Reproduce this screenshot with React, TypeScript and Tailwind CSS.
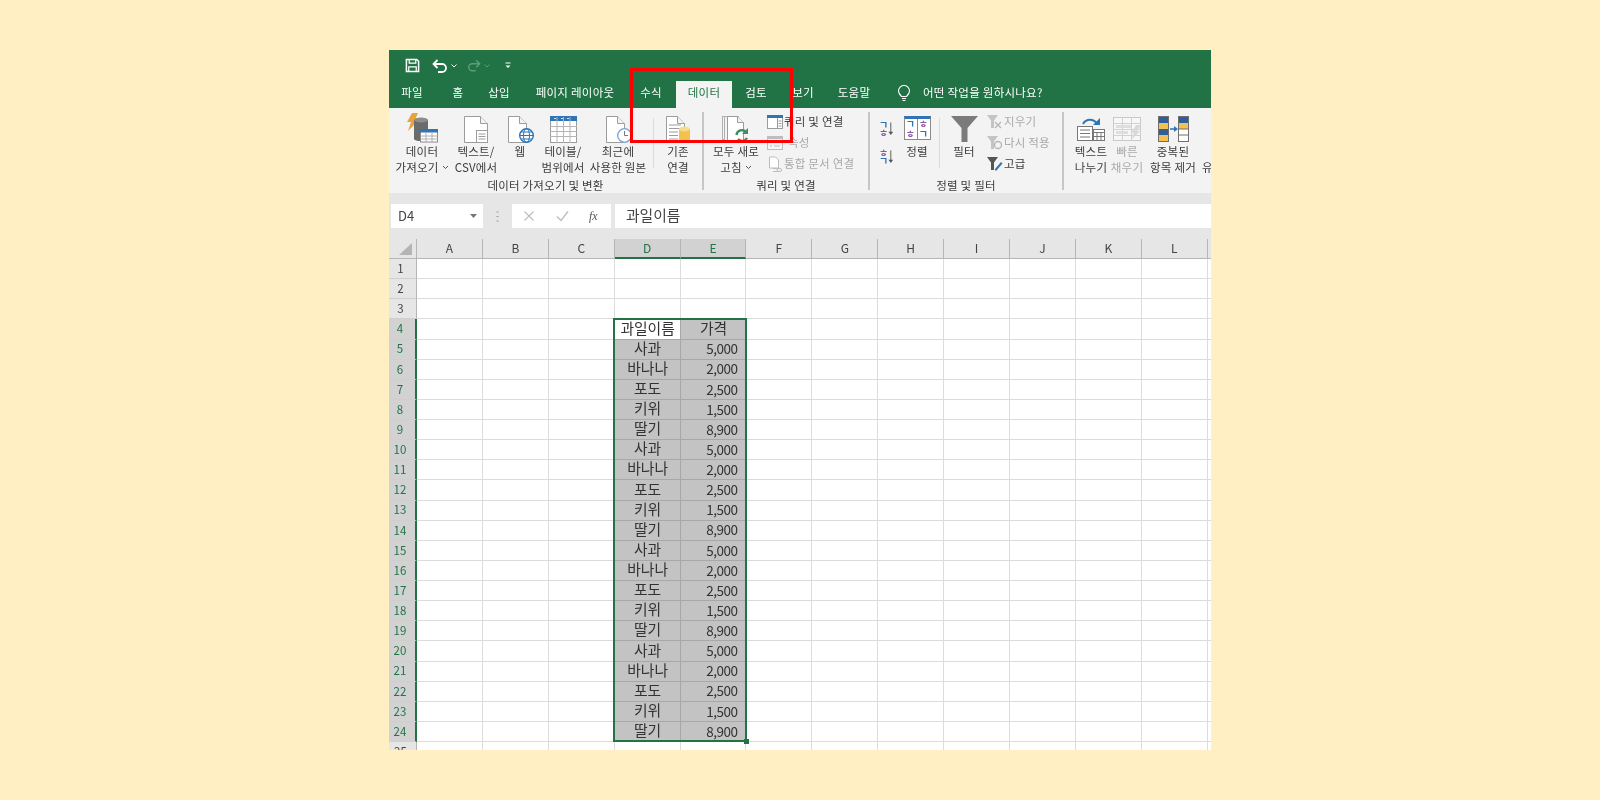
import React from "react";

const F = "font-['Noto_Sans_CJK_KR','Noto_Sans',sans-serif]";
const ST = "#9c9c9c";

const DocShape = ({ w = 18 }: { w?: number }) => (
  <g>
    <path d={`M1.500 0.500h${w - 7}l7 7v19h-${w}z`} fill="#fff" stroke={ST} />
    <path d={`M${w - 5.5} 0.500v7h7`} fill="#f3f3f3" stroke={ST} />
  </g>
);

const Cyl = ({ x, y, w, h, c, top }: { x: number; y: number; w: number; h: number; c: string; top: string }) => (
  <g>
    <rect x={x} y={y + 2} width={w} height={h - 2} fill={c} />
    <ellipse cx={x + w / 2} cy={y + 2} rx={w / 2} ry={2.5} fill={top} />
    <ellipse cx={x + w / 2} cy={y + h} rx={w / 2} ry={2} fill={c} />
  </g>
);

const IconData = () => (
  <svg width="31" height="30" viewBox="0 0 31 30">
    <path d="M5 0h6L8 7h4L1 18l3-9H0z" fill="#e8a33d" />
    <Cyl x={7} y={5} w={14} h={21} c="#6b6b6b" top="#8d8d8d" />
    <rect x="13.500" y="16.500" width="17" height="12.500" fill="#fff" stroke="#8a8a8a" />
    <rect x="13" y="16" width="18" height="3.500" fill="#2f75b5" />
    <path d="M19 19v10M25 19v10M13.500 23h17M13.500 26h17" stroke="#b0b0b0" />
  </svg>
);

const IconCsv = () => (
  <svg width="26" height="27" viewBox="0 0 26 27">
    <DocShape w={23} />
    <rect x="13.500" y="14.500" width="11" height="12" fill="#fff" stroke={ST} />
    <path d="M15.500 18h7M15.500 20.500h7M15.500 23h7" stroke={ST} />
  </svg>
);

const IconWeb = () => (
  <svg width="27" height="27" viewBox="0 0 27 27">
    <DocShape w={18} />
    <circle cx="19.500" cy="19.500" r="6.800" fill="#fff" stroke="#2f75b5" strokeWidth="1.400" />
    <ellipse cx="19.500" cy="19.500" rx="3" ry="6.800" fill="none" stroke="#2f75b5" />
    <path d="M12.500 19.500h14M14 16h11M14 23h11" stroke="#2f75b5" />
  </svg>
);

const IconTable = () => (
  <svg width="27" height="27" viewBox="0 0 27 27">
    <rect x="0.500" y="0.500" width="26" height="26" fill="#fff" stroke={ST} />
    <rect x="0" y="0" width="27" height="5" fill="#2f75b5" />
    <path d="M7 1v26M13.500 1v26M20 1v26M0 10.500h27M0 15.500h27M0 20.500h27" stroke="#b5b5b5" />
    <path d="M4 2.500h2M11 2.500h2M17 2.500h2" stroke="#cfe2f3" />
  </svg>
);

const IconRecent = () => (
  <svg width="27" height="27" viewBox="0 0 27 27">
    <DocShape w={18} />
    <circle cx="19.500" cy="19.500" r="6.800" fill="#fff" stroke="#7aa3cc" strokeWidth="1.300" />
    <path d="M19.500 15v4.500h3.500" fill="none" stroke="#777" />
  </svg>
);

const IconExisting = () => (
  <svg width="27" height="27" viewBox="0 0 27 27">
    <DocShape w={18} />
    <path d="M4 9h12M4 12.500h12M4 16h9M4 19.500h9M4 23h9" stroke={ST} />
    <Cyl x={14} y={11} w={11} h={14} c="#f2c14e" top="#f8dc8e" />
  </svg>
);

const IconRefresh = () => (
  <svg width="29" height="27" viewBox="0 0 29 27">
    <rect x="0.500" y="0.500" width="14" height="23" fill="#f3f3f3" stroke="#b0b0b0" />
    <rect x="2.500" y="0.500" width="14" height="24" fill="#f3f3f3" stroke="#b0b0b0" />
    <path d="M5.500 0.500h10l6 6v19h-16z" fill="#fff" stroke={ST} />
    <path d="M15.500 0.500v6h6" fill="#f3f3f3" stroke={ST} />
    <path d="M14.500 19a5.500 5.500 0 0 1 9.500-3" fill="none" stroke="#3d8f5f" strokeWidth="2.400" />
    <path d="M26 12v6h-6z" fill="#3d8f5f" />
    <path d="M25 22a5.500 5.500 0 0 1-9 1" fill="none" stroke="#3d8f5f" strokeWidth="2.400" />
  </svg>
);

const IconQuery = () => (
  <svg width="16" height="14" viewBox="0 0 16 14">
    <rect x="0.500" y="0.500" width="15" height="13" fill="#fff" stroke={ST} />
    <rect x="0" y="0" width="16" height="3" fill="#2f75b5" />
    <path d="M10.500 3v10M11.500 6h3M11.500 8.500h3M11.500 11h3" stroke={ST} />
  </svg>
);

const IconProps = () => (
  <svg width="16" height="14" viewBox="0 0 16 14">
    <rect x="0.500" y="0.500" width="15" height="13" fill="#f7f7f7" stroke="#bdbdbd" />
    <rect x="0" y="0" width="16" height="3" fill="#bdbdbd" />
    <path d="M3 6.500h2M7 6.500h6M3 10h2M7 10h6" stroke="#bdbdbd" />
  </svg>
);

const IconLinkDoc = () => (
  <svg width="16" height="16" viewBox="0 0 16 16">
    <path d="M2.500 1h6l3 3v8h-9z" fill="#fff" stroke="#bdbdbd" />
    <path d="M6 12.500h3a1.500 1.500 0 0 1 0 3H6M10 12.500h3a1.500 1.500 0 0 1 0 3h-3" fill="none" stroke="#bdbdbd" />
  </svg>
);

const SortSmall = ({ top, bottom, hTop = false }: { top: string; bottom: string; hTop?: boolean }) => (
  <div className="flex items-center h-[16px] w-[15px]">
    <div className="flex flex-col items-center leading-[8px] text-[10px] font-bold">
      <span className={hTop ? "text-[#8e5aa8]" : "text-[#2f75b5]"}>{top}</span>
      <span className={hTop ? "text-[#2f75b5]" : "text-[#8e5aa8]"}>{bottom}</span>
    </div>
    <svg width="6" height="14" viewBox="0 0 6 14">
      <path d="M3 0v11" stroke="#555" />
      <path d="M0.500 10h5L3 13.500z" fill="#555" />
    </svg>
  </div>
);

const BigSort = () => (
  <div className="w-[27px] h-[24px] border border-[#8a8a8a] bg-white border-t-[3px] border-t-[#2f75b5] flex text-[10px] leading-[10px] font-bold">
    <div className="flex-1 flex flex-col items-center justify-center border-r border-[#8a8a8a]">
      <span className="text-[#2f75b5]">ㄱ</span>
      <span className="text-[#8e5aa8]">ㅎ</span>
    </div>
    <div className="flex-1 flex flex-col items-center justify-center">
      <span className="text-[#8e5aa8]">ㅎ</span>
      <span className="text-[#2f75b5]">ㄱ</span>
    </div>
  </div>
);

const Funnel = () => (
  <svg width="27" height="26" viewBox="0 0 27 26">
    <path d="M0 0h27L16.500 12v14h-6V12z" fill="#7b7b7b" />
  </svg>
);

const SmallFunnel = ({ c, mark }: { c: string; mark: "x" | "r" | "p" }) => (
  <svg width="16" height="15" viewBox="0 0 16 15">
    <path d="M0 1h11L7 6.500V14H4V6.500z" fill={c} />
    {mark === "x" && <path d="M8 8l6 6M14 8l-6 6" stroke="#b5b5b5" strokeWidth="1.300" />}
    {mark === "r" && <circle cx="11" cy="10" r="3.500" fill="none" stroke="#b5b5b5" strokeWidth="1.300" />}
    {mark === "p" && <path d="M8 13l6-7 1.500 1.500-6 7H8z" fill="#2f75b5" />}
  </svg>
);

const IconSplit = () => (
  <svg width="30" height="26" viewBox="0 0 30 26">
    <path d="M7 8a8 8 0 0 1 14 0" fill="none" stroke="#2f75b5" strokeWidth="2" />
    <path d="M17 9h7V2z" fill="#2f75b5" />
    <rect x="1.500" y="10.500" width="15" height="14" fill="#fff" stroke="#777" />
    <path d="M4 14h10M4 17.500h10M4 21h10" stroke="#777" />
    <rect x="17.500" y="13.500" width="11" height="11" fill="#fff" stroke="#777" />
    <path d="M17.500 16.500h11M21 17v7M25 17v7M17.500 20.500h11" stroke="#777" />
  </svg>
);

const IconFlash = () => (
  <svg width="29" height="26" viewBox="0 0 29 26">
    <rect x="0.500" y="1.500" width="27" height="23" fill="#f7f7f7" stroke="#c9c9c9" />
    <path d="M0 7.500h28M0 13.500h28M0 19.500h28M9.500 1v24M18.500 1v24" stroke="#d2d2d2" />
    <path d="M3 9h15v3H3zM3 15h12v3H3z" fill="#dedede" />
    <path d="M23 9h5l-4 6h3l-9 9 3-7h-3z" fill="#d9d9d9" />
  </svg>
);

const IconDup = () => (
  <svg width="31" height="26" viewBox="0 0 31 26">
    <rect x="0.500" y="0.500" width="10" height="25" fill="#fff" stroke="#6f6f6f" />
    <rect x="1" y="1" width="9" height="6" fill="#2f5d9e" />
    <rect x="1" y="7" width="9" height="6" fill="#f2c14e" />
    <rect x="1" y="13" width="9" height="6" fill="#2f5d9e" />
    <rect x="1" y="19" width="9" height="6" fill="#f2c14e" />
    <path d="M12 13h5" stroke="#2f75b5" strokeWidth="1.500" />
    <path d="M16 10l4 3-4 3z" fill="#2f75b5" />
    <rect x="20.500" y="0.500" width="10" height="25" fill="#fff" stroke="#6f6f6f" />
    <rect x="21" y="1" width="9" height="6" fill="#2f5d9e" />
    <rect x="21" y="7" width="9" height="6" fill="#f2c14e" />
    <path d="M21 19h9M21 13h9" stroke="#6f6f6f" />
  </svg>
);

const Big = ({ w, icon, lines, dim, caret, pt = 8 }: { w: number; icon: React.ReactNode; lines: string[]; dim?: boolean; caret?: number; pt?: number }) => (
  <div className="flex flex-col items-center shrink-0" style={{ width: w }}>
    <div className="h-[36px] flex items-start justify-center" style={{ paddingTop: pt }}>
      {icon}
    </div>
    {lines.map((l, i) => (
      <div key={i} className={`leading-[15px] whitespace-nowrap flex items-center justify-center h-[15.500px] ${dim ? "text-[#a9a9a9]" : "text-[#3c3c3c]"}`}>
        {l}
        {caret === i && (
          <svg width="7" height="5" viewBox="0 0 7 5" className="ml-[3px]">
            <path d="M1 1l2.500 2.500L6 1" fill="none" stroke="#555" />
          </svg>
        )}
      </div>
    ))}
  </div>
);

const Small = ({ icon, text, dim, gap = 1 }: { icon: React.ReactNode; text: string; dim?: boolean; gap?: number }) => (
  <div className={`h-[21px] flex items-center whitespace-nowrap ${dim ? "text-[#a9a9a9]" : "text-[#3c3c3c]"}`} style={{ gap }}>
    <div className="w-[16px] flex justify-center">{icon}</div>
    {text}
  </div>
);

const Group = ({ w, label, children }: { w: number; label: string; children: React.ReactNode }) => (
  <div className="flex shrink-0 h-full" style={{ width: w }}>
    <div className="flex-1 flex flex-col min-w-0">
      <div className="flex h-[69px]">{children}</div>
      <div className="h-[16px] leading-[17px] text-center text-[#3c3c3c] whitespace-nowrap">{label}</div>
    </div>
    <div className="w-[2px] bg-[#c6c6c6] mt-[4px] mb-[3px] shrink-0" />
  </div>
);

const VLine = ({ ml, mr }: { ml: number; mr: number }) => (
  <div className="w-px bg-[#dcdcdc] mt-[10px] h-[50px] shrink-0" style={{ marginLeft: ml, marginRight: mr }} />
);

const Tab = ({ w, t, active, mr = 0 }: { w: number; t: string; active?: boolean; mr?: number }) => (
  <div
    className={`h-[27px] flex items-center justify-center pb-[3px] shrink-0 whitespace-nowrap ${active ? "bg-[#f3f3f3] text-[#217346]" : "text-white"}`}
    style={{ width: w, marginRight: mr }}
  >
    {t}
  </div>
);

const cols = ["A", "B", "C", "D", "E", "F", "G", "H", "I", "J", "K", "L", "M"];
const fruits = ["사과", "바나나", "포도", "키위", "딸기"];
const prices = ["5,000", "2,000", "2,500", "1,500", "8,900"];
const rows = Array.from({ length: 25 }, (_, i) => i + 1);

const Row = ({ n }: { n: number }) => {
  const sel = n >= 4 && n <= 24;
  const idx = (n - 5) % 5;
  return (
    <div className="grid grid-cols-[28px_repeat(13,65.900px)] h-[20.125px]">
      <div
        className={`flex items-center justify-center pr-1 text-[11.500px] border-b border-[#cfcfcf] ${
          sel ? "bg-[#d2d2d2] text-[#217346] border-r-2 border-r-[#217346]" : "bg-[#e6e6e6] text-[#444444] border-r border-r-[#b5b5b5]"
        }`}
      >
        {n}
      </div>
      {cols.map((c) => {
        const inSel = sel && (c === "D" || c === "E");
        let text = "";
        let right = false;
        if (inSel) {
          if (n === 4) text = c === "D" ? "과일이름" : "가격";
          else if (c === "D") text = fruits[idx];
          else {
            text = prices[idx];
            right = true;
          }
        }
        const white = n === 4 && c === "D";
        return (
          <div
            key={c}
            className={`flex items-center leading-none text-[#333333] border-r border-b ${
              inSel ? (white ? "bg-white border-[#a8a8a8]" : "bg-[#c3c3c3] border-[#a8a8a8]") : "bg-white border-[#dcdcdc]"
            } ${right ? "justify-end pr-[8px] text-[13.500px] tracking-[-0.5px]" : "justify-center pb-[2px] pl-[1px] text-[14.800px]"}`}
          >
            {text}
          </div>
        );
      })}
    </div>
  );
};

export default function App() {
  return (
    <div className={`w-[1600px] h-[800px] bg-[#ffefc3] pt-[50px] overflow-hidden ${F}`}>
      <div className="relative w-[822px] h-[700px] mx-auto">
        <div className="w-full h-full overflow-hidden bg-white flex flex-col blur-[0.4px]">
          {/* title bar */}
          <div className="bg-[#217346] h-[58px] shrink-0 flex flex-col">
            <div className="h-[31px] flex items-center text-white">
              <svg width="15" height="15" viewBox="0 0 16 16" className="ml-[16px]">
                <path d="M1.500 1.500h11l2 2v11h-13z" fill="none" stroke="#fff" strokeWidth="1.600" />
                <path d="M4.500 1.500v4h7v-4M4 14.500v-5h8v5" fill="none" stroke="#fff" strokeWidth="1.300" />
              </svg>
              <svg width="16" height="14" viewBox="0 0 16 14" className="ml-[12px]">
                <path d="M2 5h8a4 4 0 0 1 0 8H6" fill="none" stroke="#fff" strokeWidth="1.800" />
                <path d="M5.500 1L1.500 5l4 4" fill="none" stroke="#fff" strokeWidth="1.800" />
              </svg>
              <svg width="6" height="4" viewBox="0 0 6 4" className="ml-[3px]">
                <path d="M0.500 0.500L3 3l2.500-2.500" fill="none" stroke="#fff" />
              </svg>
              <svg width="14" height="13" viewBox="0 0 16 14" className="ml-[10px]">
                <path d="M14 5H6a4 4 0 0 0 0 8h4" fill="none" stroke="#5f9c7c" strokeWidth="1.600" />
                <path d="M10.500 1l4 4-4 4" fill="none" stroke="#5f9c7c" strokeWidth="1.600" />
              </svg>
              <svg width="6" height="4" viewBox="0 0 6 4" className="ml-[3px]">
                <path d="M0.500 0.500L3 3l2.500-2.500" fill="none" stroke="#5f9c7c" />
              </svg>
              <svg width="6" height="7" viewBox="0 0 6 7" className="ml-[15px]">
                <path d="M0.500 1h5" stroke="#fff" />
                <path d="M0.500 3.500h5L3 6z" fill="#fff" />
              </svg>
            </div>
            <div className="h-[27px] flex items-center text-[11.500px] tracking-[0.25px]">
              <Tab w={46} t="파일" />
              <Tab w={46} t="홈" />
              <Tab w={36} t="삽입" />
              <Tab w={116} t="페이지 레이아웃" />
              <Tab w={36} t="수식" mr={7} />
              <Tab w={56} t="데이터" active />
              <Tab w={48} t="검토" />
              <Tab w={46} t="보기" />
              <Tab w={56} t="도움말" />
              <svg width="14" height="17" viewBox="0 0 14 17" className="ml-[15px] mb-[3px]">
                <path d="M4.500 11.500C3 10 1.500 8.500 1.500 6a5.500 5.500 0 0 1 11 0c0 2.500-1.500 4-3 5.500z" fill="none" stroke="#fff" strokeWidth="1.100" />
                <path d="M5 13.500h4M5.500 15.500h3" stroke="#fff" />
              </svg>
              <div className="ml-[12px] pb-[3px] text-white whitespace-nowrap">어떤 작업을 원하시나요?</div>
            </div>
          </div>

          {/* ribbon */}
          <div className="bg-[#f3f3f3] h-[85px] shrink-0 flex text-[11.500px] tracking-[0.2px]">
            <Group w={315} label="데이터 가져오기 및 변환">
              <Big w={66} pt={5} icon={<IconData />} lines={["데이터", "가져오기"]} caret={1} />
              <Big w={42} icon={<IconCsv />} lines={["텍스트/", "CSV에서"]} />
              <Big w={46} icon={<IconWeb />} lines={["웹"]} />
              <Big w={40} icon={<IconTable />} lines={["테이블/", "범위에서"]} />
              <Big w={70} icon={<IconRecent />} lines={["최근에", "사용한 원본"]} />
              <VLine ml={0} mr={0} />
              <Big w={48} icon={<IconExisting />} lines={["기존", "연결"]} />
            </Group>
            <Group w={166} label="쿼리 및 연결">
              <Big w={64} icon={<IconRefresh />} lines={["모두 새로", "고침"]} caret={1} />
              <div className="pt-[3px] -ml-[1px]">
                <Small icon={<IconQuery />} text="쿼리 및 연결" />
                <Small icon={<IconProps />} text="속성" dim gap={5} />
                <Small icon={<IconLinkDoc />} text="통합 문서 연결" dim />
              </div>
            </Group>
            <Group w={194} label="정렬 및 필터">
              <div className="w-[33px] flex flex-col items-center pt-[13px] gap-[12px] shrink-0">
                <SortSmall top="ㄱ" bottom="ㅎ" />
                <SortSmall top="ㅎ" bottom="ㄱ" hTop />
              </div>
              <Big w={28} icon={<BigSort />} lines={["정렬"]} />
              <VLine ml={8} mr={6} />
              <Big w={36} icon={<Funnel />} lines={["필터"]} />
              <div className="pt-[3px] ml-[5px]">
                <Small icon={<SmallFunnel c="#c4c4c4" mark="x" />} text="지우기" dim />
                <Small icon={<SmallFunnel c="#c4c4c4" mark="r" />} text="다시 적용" dim />
                <Small icon={<SmallFunnel c="#555555" mark="p" />} text="고급" />
              </div>
            </Group>
            <div className="flex h-[69px] pl-[9px]">
              <Big w={36} icon={<IconSplit />} lines={["텍스트", "나누기"]} />
              <Big w={36} icon={<IconFlash />} lines={["빠른", "채우기"]} dim />
              <Big w={56} icon={<IconDup />} lines={["중복된", "항목 제거"]} />
              <div className="pt-[52px] pl-[1px] leading-[15px] text-[#3c3c3c]">유</div>
            </div>
          </div>

          {/* formula bar */}
          <div className="bg-[#e6e6e6] h-[46px] shrink-0 pt-[11px] pl-[2px] flex items-start">
            <div className="w-[92px] h-[24px] bg-white flex items-center justify-between pl-[7px] pr-[6px] text-[13px] text-[#444444]">
              D4
              <svg width="7" height="4" viewBox="0 0 7 4">
                <path d="M0 0h7L3.500 4z" fill="#777" />
              </svg>
            </div>
            <div className="w-[29px] h-[24px] flex items-center justify-center">
              <svg width="3" height="11" viewBox="0 0 3 11">
                <path d="M0.500 1h2M0.500 5.500h2M0.500 10h2" stroke="#999" />
              </svg>
            </div>
            <div className="w-[99px] h-[24px] bg-white flex items-center pl-[11px] text-[#777777]">
              <svg width="12" height="12" viewBox="0 0 12 12">
                <path d="M1.500 1.500l9 9M10.500 1.500l-9 9" stroke="#bdbdbd" strokeWidth="1.200" />
              </svg>
              <svg width="13" height="12" viewBox="0 0 13 12" className="ml-[21px]">
                <path d="M1 6.500l4 4 7-9" fill="none" stroke="#bdbdbd" strokeWidth="1.300" />
              </svg>
              <span className="ml-[20px] font-['Liberation_Serif',serif] italic text-[12px] text-[#555555]">fx</span>
            </div>
            <div className="ml-[4px] flex-1 h-[24px] bg-white flex items-center pl-[11px] pb-[2px] text-[14.800px] text-[#444444]">과일이름</div>
          </div>

          {/* sheet */}
          <div className="relative flex-1 overflow-hidden">
            <div className="grid grid-cols-[28px_repeat(13,65.900px)] h-[20px]">
              <div className="bg-[#e6e6e6] flex items-end justify-end pr-[4px] pb-[3px] border-r border-b border-[#b5b5b5]">
                <svg width="13" height="12" viewBox="0 0 13 12">
                  <path d="M13 0v12H0z" fill="#b4b4b4" />
                </svg>
              </div>
              {cols.map((c) => {
                const s = c === "D" || c === "E";
                return (
                  <div
                    key={c}
                    className={`flex items-center justify-center pb-[1px] leading-none text-[12px] border-r ${
                      s
                        ? "bg-[#d2d2d2] text-[#217346] border-r-[#b5b5b5] border-b-2 border-b-[#217346]"
                        : "bg-[#e6e6e6] text-[#444444] border-r-[#b5b5b5] border-b border-b-[#b5b5b5]"
                    }`}
                  >
                    {c}
                  </div>
                );
              })}
            </div>
            {rows.map((n) => (
              <Row key={n} n={n} />
            ))}
            <div className="absolute left-[224px] top-[79px] w-[134px] h-[424px] border-2 border-[#217346] pointer-events-none" />
            <div className="absolute left-[355px] top-[500px] w-[5px] h-[5px] bg-[#217346]" />
          </div>
        </div>
        {/* red annotation */}
        <div className="absolute left-[241px] top-[18px] w-[163px] h-[75px] border-[3.500px] border-[#ff0000]" />
      </div>
    </div>
  );
}
